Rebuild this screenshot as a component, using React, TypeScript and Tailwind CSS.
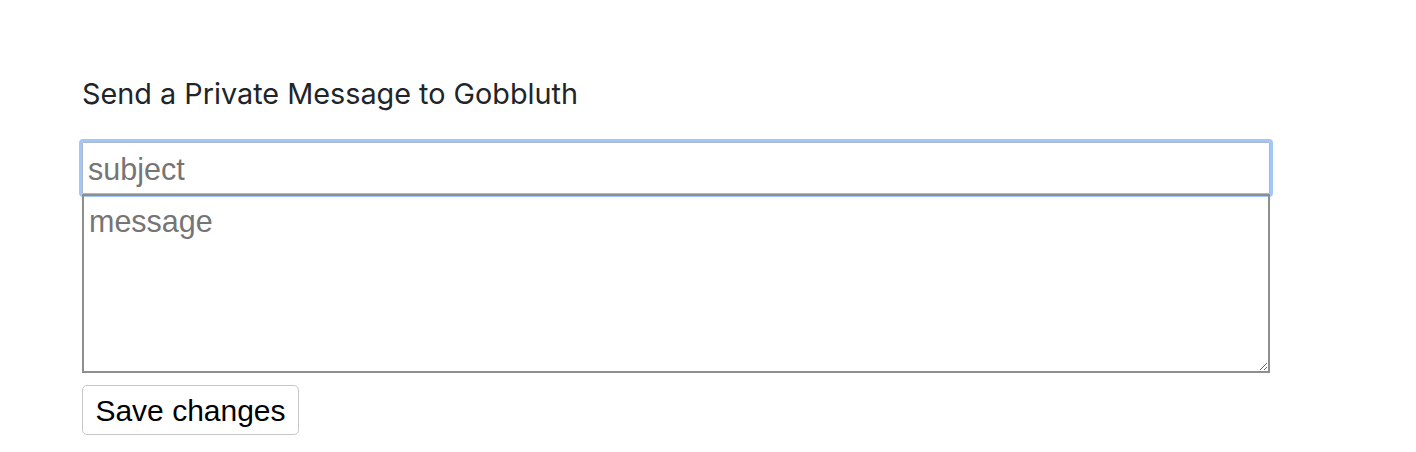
import React from 'react'

export default function App() {
  return (
    <div className="w-[1416px] h-[452px] bg-white pt-[77px] pl-[82px]">
      <h5 className="text-[28.8px] leading-[34px] text-[#212529] font-['Inter',sans-serif]">
        Send a Private Message to Gobbluth
      </h5>

      <form className="mt-[31px] w-[1188px] flex flex-col">
        <input
          type="text"
          placeholder="subject"
          className="h-[52px] pl-[5px] pt-[2px] border border-[#a9b7c9] rounded-[1px] outline-[3px] outline-solid outline-[#a3c6fa] outline-offset-0 text-[30.5px] font-['Liberation_Sans',sans-serif] placeholder:text-[#757575]"
        />
        <textarea
          placeholder="message"
          className="h-[179px] pl-[5px] pt-[7px] border-2 border-[#8e8e8e] text-[30.5px] leading-[36px] font-['Liberation_Sans',sans-serif] placeholder:text-[#757575]"
        />
        <div className="mt-[12px]">
          <button
            type="button"
            className="h-[50px] w-[217px] pt-[1px] border border-[#c7c7c7] rounded-[5px] bg-white text-[30px] text-black font-['Liberation_Sans',sans-serif]"
          >
            Save changes
          </button>
        </div>
      </form>
    </div>
  )
}
